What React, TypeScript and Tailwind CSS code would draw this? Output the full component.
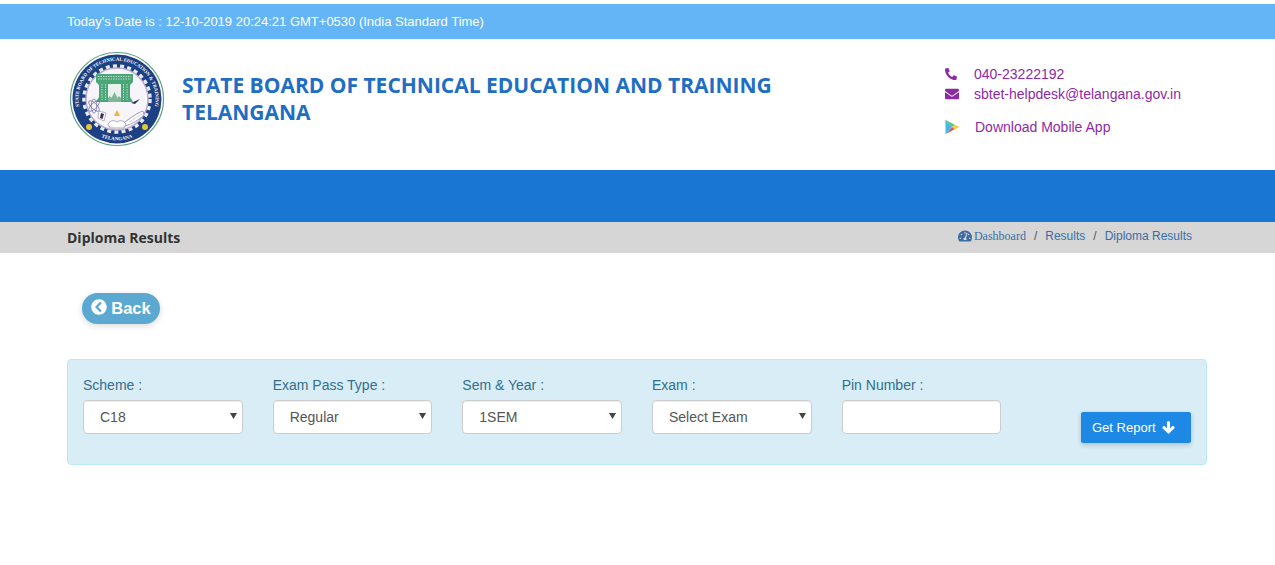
import React from 'react';
import { FaPhone, FaEnvelope, FaTachometerAlt, FaChevronCircleLeft, FaArrowDown } from 'react-icons/fa';

const sans = 'font-["Liberation_Sans",Arial,sans-serif]';

function Emblem() {
  return (
    <svg width="96" height="96" viewBox="0 0 96 96" className="shrink-0">
      <defs>
        <path id="ringTop" d="M 15 68 A 38.5 38.5 0 1 1 81 68" />
        <path id="ringBottom" d="M 26 83 A 41 41 0 0 0 70 83" />
      </defs>
      <circle cx="48" cy="48" r="46.5" fill="#fff" stroke="#5f9f86" strokeWidth="1.2" />
      <circle cx="48" cy="48" r="44.5" fill="#1d3f83" />
      <circle cx="48" cy="48" r="33" fill="none" stroke="#e9ebf3" strokeWidth="3.5" strokeDasharray="4 3.2" />
      <circle cx="48" cy="48" r="31" fill="#f7f5fa" stroke="#b9aecb" strokeWidth="1.4" />
      <text fontSize="4.9" fontWeight="700" fill="#fff" fontFamily="Liberation Serif, serif">
        <textPath href="#ringTop" startOffset="50%" textAnchor="middle">
          STATE BOARD OF TECHNICAL EDUCATION &amp; TRAINING
        </textPath>
      </text>
      <text fontSize="5" fontWeight="700" fill="#fff" fontFamily="Liberation Serif, serif">
        <textPath href="#ringBottom" startOffset="50%" textAnchor="middle">
          TELANGANA
        </textPath>
      </text>
      <circle cx="20" cy="76" r="3" fill="#e6c534" />
      <circle cx="76" cy="76" r="3" fill="#e6c534" />
      {/* gate */}
      <path d="M27 23h37v8l-3 3v12l3 5H27l3-5V34l-3-3z" fill="#4aa577" />
      <path d="M29 25.5h33M29 28h33M33 33v16M36.500 33v16M54.500 33v16M58 33v16" stroke="#d5eee0" strokeWidth="0.8" strokeDasharray="1.5 1" fill="none" />
      <path d="M39 33h13v18H39z" fill="#e8f1ec" />
      <path d="M39 51v-4l2-2 1.500 2 3-6 3 6 1.500-2 2 2v4z" fill="#7fb79b" />
      {/* atom */}
      <g stroke="#6f6a94" strokeWidth="0.7" fill="none">
        <ellipse cx="25" cy="55" rx="7" ry="2.800" transform="rotate(45 25 55)" />
        <ellipse cx="25" cy="55" rx="7" ry="2.800" transform="rotate(-45 25 55)" />
        <ellipse cx="25" cy="55" rx="7" ry="2.800" transform="rotate(90 25 55)" />
      </g>
      {/* tools */}
      <path d="M30 60l7 2-2 8-6-3z" fill="#fff" stroke="#8d84a8" strokeWidth="0.6" />
      <path d="M32 62l3 1-1.500 5-2.500-1z" fill="#38324d" />
      <path d="M62 52l9-4-5 5z" fill="#2b3560" />
      <path d="M54 72c5-2 11-9 20-12l1 4c-5 5-12 9-19 11z" fill="#fff" stroke="#7c7aa3" strokeWidth="0.7" />
      <path d="M58 69l13-8M60 71l13-8" stroke="#a7a4c4" strokeWidth="0.5" />
      <path d="M48 59l3 6h-6z" fill="#e9b92f" />
      <path d="M39 73c3-4 6-4 9-2 3-2 6-2 9 2l-2 4H41z" fill="#fff" stroke="#8d84a8" strokeWidth="0.7" />
    </svg>
  );
}

function PlayIcon() {
  return (
    <svg width="16" height="16" viewBox="0 0 16 16" className="shrink-0">
      <path d="M1.500 0.800L11 6 8 8z" fill="#5fc47a" />
      <path d="M1.500 15.200L11 10 8 8z" fill="#e8574f" />
      <path d="M1.500 0.800L8 8l-6.500 7.200z" fill="#45b8e8" />
      <path d="M11 6l4.500 2-4.500 2.200L8 8z" fill="#f9c63d" />
    </svg>
  );
}

function Field({ label, value }: { label: string; value?: string }) {
  return (
    <div className="px-[15px]">
      <label className="block text-[14px] leading-[20px] mb-[5px] text-[#31708f]">{label}</label>
      {value ? (
        <div className="relative">
          <select
            defaultValue={value}
            className={`${sans} block w-full h-[34px] appearance-none rounded-[4px] border border-[#ccc] bg-white pl-4 pr-6 text-[14px] text-[#555] shadow-[inset_0_1px_1px_rgba(0,0,0,0.075)]`}
          >
            <option>{value}</option>
          </select>
          <svg width="7" height="6" viewBox="0 0 7 6" className="absolute right-[6px] top-[13px]">
            <path d="M0 0h7L3.500 6z" fill="#444" />
          </svg>
        </div>
      ) : (
        <input
          type="text"
          className="block w-full h-[34px] rounded-[4px] border border-[#ccc] bg-white px-3 text-[14px] text-[#555] shadow-[inset_0_1px_1px_rgba(0,0,0,0.075)]"
        />
      )}
    </div>
  );
}

export default function App() {
  return (
    <div className={`${sans} min-h-[565px] bg-white pt-[4px]`}>
      <div className="h-[35px] bg-[#64b5f6] pl-[67px] flex items-center text-[13px] text-white">
        Today's Date is : 12-10-2019 20:24:21 GMT+0530 (India Standard Time)
      </div>

      <header className="h-[131px] flex items-start pl-[69px]">
        <div className="mt-[12px]">
          <Emblem />
        </div>
        <h1 className='ml-[17px] mt-[33px] w-[640px] font-["Open_Sans",sans-serif] text-[21px] leading-[27px] font-bold text-[#1f6ec4]'>
          STATE BOARD OF TECHNICAL EDUCATION AND TRAINING TELANGANA
        </h1>
        <div className="ml-[122px] mt-[25px] text-[14px] text-[#8e2aa6]">
          <div className="flex items-center h-[20px]">
            <FaPhone className="w-[12px] h-[12px] ml-[1px] mr-[17px] -scale-x-100" />
            <span>040-23222192</span>
          </div>
          <div className="flex items-center h-[20px]">
            <FaEnvelope className="w-[14px] h-[14px] ml-[1px] mr-[15px]" />
            <span>sbtet-helpdesk@telangana.gov.in</span>
          </div>
          <div className="flex items-center mt-[13px] h-[20px]">
            <PlayIcon />
            <span className="ml-[15px]">Download Mobile App</span>
          </div>
        </div>
      </header>

      <nav className="h-[52px] bg-[#1976d2]" />

      <div className="h-[31px] bg-[#d6d6d6] pl-[67px] pr-[83px] flex items-center justify-between">
        <span className='font-["Open_Sans",sans-serif] text-[14px] font-bold text-[#333]'>Diploma Results</span>
        <div className="flex items-center text-[12px] text-[#3a6ea5] -mt-[3px]">
          <FaTachometerAlt className="w-[14px] h-[14px] mr-[2px]" />
          <span className='font-["Liberation_Serif",serif]'>Dashboard</span>
          <span className="mx-[8px] text-[#555]">/</span>
          <span>Results</span>
          <span className="mx-[8px] text-[#555]">/</span>
          <span>Diploma Results</span>
        </div>
      </div>

      <div className="pl-[82px] pt-[40px]">
        <button
          type="button"
          className="h-[31px] w-[78px] rounded-full bg-[#5ba8d0] text-white text-[16.5px] font-bold flex items-center justify-center gap-[4px] shadow-[0_2px_6px_rgba(0,0,0,0.15)]"
        >
          <FaChevronCircleLeft className="w-[16px] h-[16px] -mt-[3px]" />
          Back
        </button>
      </div>

      <section className="mx-[67px] mt-[35px] h-[106px] w-[1140px] rounded-[4px] border border-[#bce8f1] bg-[#d9edf7] pt-[15px] grid grid-cols-6">
        <Field label="Scheme :" value="C18" />
        <Field label="Exam Pass Type :" value="Regular" />
        <Field label="Sem & Year :" value="1SEM" />
        <Field label="Exam :" value="Select Exam" />
        <Field label="Pin Number :" />
        <div className="px-[15px] flex justify-end items-start pt-[37px]">
          <button
            type="button"
            className="h-[31px] w-[110px] rounded-[2px] bg-[#1e88e5] pl-[11px] text-white text-[13px] flex items-center justify-start gap-[6px] shadow-[0_2px_5px_rgba(0,0,0,0.2)]"
          >
            Get Report
            <FaArrowDown className="w-[13px] h-[13px] stroke-white stroke-[40px]" />
          </button>
        </div>
      </section>
    </div>
  );
}
